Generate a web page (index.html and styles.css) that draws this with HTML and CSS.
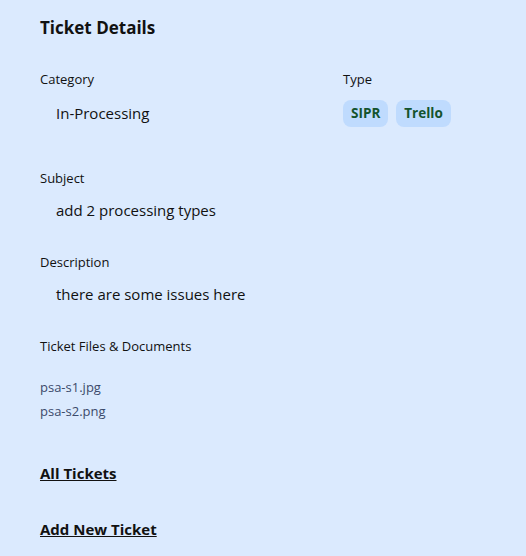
FILE: index.html
```html
<!DOCTYPE html>
<html>
<head>
<meta charset="utf-8">
<link rel="stylesheet" href="styles.css">
</head>
<body>
<main class="page">
  <h1 class="title">Ticket Details</h1>
  <section class="row-top">
    <div class="field">
      <div class="label">Category</div>
      <div class="value value-top">In-Processing</div>
    </div>
    <div class="field">
      <div class="label">Type</div>
      <div class="badges">
        <span class="badge">SIPR</span>
        <span class="badge">Trello</span>
      </div>
    </div>
  </section>
  <section class="field field-gap">
    <div class="label">Subject</div>
    <div class="value">add 2 processing types</div>
  </section>
  <section class="field field-gap2">
    <div class="label">Description</div>
    <div class="value">there are some issues here</div>
  </section>
  <section class="field field-gap2">
    <div class="label">Ticket Files &amp; Documents</div>
    <ul class="files">
      <li><a class="file" href="#">psa-s1.jpg</a></li>
      <li><a class="file" href="#">psa-s2.png</a></li>
    </ul>
  </section>
  <nav class="links">
    <a class="nav-link" href="#">All Tickets</a>
    <a class="nav-link" href="#">Add New Ticket</a>
  </nav>
</main>
</body>
</html>
```
FILE: styles.css
```css
html, body {
  margin: 0;
  padding: 0;
  background: #dbeafe;
}
body {
  font-family: "Open Sans", "Noto Sans", sans-serif;
  color: #111;
}
.page {
  padding: 16px 40px;
}
.title {
  margin: 0;
  font-size: 17px;
  line-height: 24px;
  font-weight: 700;
}
.row-top {
  display: grid;
  grid-template-columns: 303px 1fr;
  margin-top: 29px;
}
.label {
  font-size: 13px;
  line-height: 20px;
}
.value {
  font-size: 15px;
  line-height: 24px;
  padding-left: 16px;
  margin-top: 10px;
}
.value-top {
  line-height: 27px;
  margin-top: 11px;
}
.badges {
  display: flex;
  gap: 8px;
  margin-top: 11px;
}
.badge {
  background: #bfdbfe;
  color: #14532d;
  font-weight: 700;
  font-size: 13.5px;
  line-height: 27px;
  padding: 0 8px;
  border-radius: 8px;
}
.field-gap {
  margin-top: 41px;
}
.field-gap2 {
  margin-top: 30px;
}
.files {
  list-style: none;
  margin: 19px 0 0;
  padding: 0;
}
.files li {
  line-height: 23px;
}
.file {
  font-size: 13px;
  color: #3b4a6b;
  text-decoration: none;
}
.links {
  display: flex;
  flex-direction: column;
  align-items: flex-start;
  gap: 32px;
  margin-top: 38px;
}
.nav-link {
  font-size: 15px;
  line-height: 24px;
  font-weight: 700;
  color: #111;
  text-decoration: underline;
}
```
